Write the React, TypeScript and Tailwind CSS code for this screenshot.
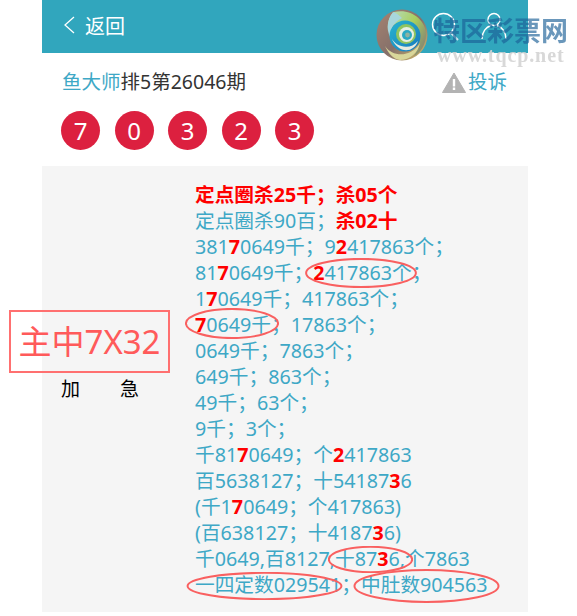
const FONT = "font-['Noto_Sans','Noto_Sans_CJK_SC',sans-serif]";

// red bold digit inside a line
function R({ children }: { children: React.ReactNode }) {
  return <b className="font-bold text-[#ff0000]">{children}</b>;
}

function Ring({ className }: { className: string }) {
  return (
    <svg className={`absolute ${className}`} viewBox="0 0 100 100" preserveAspectRatio="none">
      <ellipse cx="50" cy="50" rx="49" ry="47" fill="none" stroke="#f96060" strokeWidth="2" vectorEffect="non-scaling-stroke" />
    </svg>
  );
}

function Logo() {
  return (
    <svg width="52" height="52" viewBox="0 0 52 52">
      <defs>
        <linearGradient id="outer" x1="0" y1="0.2" x2="0.8" y2="1">
          <stop offset="0" stopColor="#a0806f" />
          <stop offset="0.55" stopColor="#85706a" />
          <stop offset="1" stopColor="#c7b06a" />
        </linearGradient>
        <linearGradient id="band" x1="0" y1="0" x2="1" y2="0.6">
          <stop offset="0" stopColor="#b8dcc8" />
          <stop offset="0.6" stopColor="#a9cf5e" />
          <stop offset="1" stopColor="#8a8f70" />
        </linearGradient>
        <linearGradient id="inner" x1="0" y1="0" x2="1" y2="1">
          <stop offset="0" stopColor="#28b5cf" />
          <stop offset="1" stopColor="#1778bd" />
        </linearGradient>
      </defs>
      <circle cx="26" cy="26" r="25.5" fill="url(#outer)" />
      <path d="M18 3C34-1 50 10 50 26 50 36 44 44 38 47 44 38 45 26 38 18 32 10 20 11 12 22 11 14 13 7 18 3Z" fill="url(#band)" />
      <path d="M17 3C10 12 10 24 17 33 13 22 16 14 26 9 23 6 20 4 17 3Z" fill="#a8d6dc" />
      <path d="M9 37C17 49 36 48 44 34 42 44 34 51 24 51 17 50 12 44 9 37Z" fill="#d9d79a" />
      <circle cx="29" cy="27" r="15.5" fill="url(#inner)" />
      <path d="M15 28C19 38 34 42 42 32 38 44 22 46 15 28Z" fill="#e8ebe0" />
      <circle cx="30" cy="25" r="10" fill="#8fc460" />
      <circle cx="30.5" cy="25.5" r="7.5" fill="#e6efe3" />
      <circle cx="31" cy="26" r="5" fill="#2aa9c4" />
      <circle cx="31.5" cy="26" r="2.4" fill="#8fb2a0" />
    </svg>
  );
}

const balls = ['7', '0', '3', '2', '3'];

export default function App() {
  return (
    <div className={`relative w-[577px] h-[616px] overflow-hidden bg-white ${FONT}`}>
      <div className="mx-[42px] w-[486px]">
        {/* header */}
        <header className="flex h-[53px] items-center bg-[#31a6bd] pl-[20px] text-white">
          <svg width="14" height="20" viewBox="0 0 14 20" className="mb-[3px]">
            <path d="M12 2 3 10l9 8" fill="none" stroke="currentColor" strokeWidth="1.3" />
          </svg>
          <span className="ml-[9px] text-[20px] leading-none">返回</span>
        </header>

        {/* title */}
        <div className="flex h-[58px] items-center justify-between pl-[20px] pr-[21px]">
          <p className="text-[19.5px] text-[#333]">
            <span className="text-[#3ea8c6]">鱼大师</span>排5第26046期
          </p>
          <div className="flex items-center gap-[2px]">
            <svg width="24" height="21" viewBox="0 0 24 21">
              <path d="M12 1 23.5 20.5H.5Z" fill="#b3b3b3" stroke="#b3b3b3" strokeLinejoin="round" />
              <rect x="10.8" y="7" width="2.4" height="7.5" fill="#fff" />
              <rect x="10.8" y="15.5" width="2.4" height="2.5" fill="#fff" />
            </svg>
            <span className="text-[19.5px] text-[#3ea8c6]">投诉</span>
          </div>
        </div>

        {/* balls */}
        <div className="flex gap-[14.5px] pl-[19px]">
          {balls.map((b, i) => (
            <span key={i} className="flex h-[39px] w-[39px] items-center justify-center rounded-full bg-[#dc203f] text-[24px] leading-none text-white">
              {b}
            </span>
          ))}
        </div>

        {/* content */}
        <div className="mt-[16px] flex h-[446px] bg-[#f5f5f5] pt-[16px]">
          <div className="flex w-[153px] shrink-0 gap-[40px] pl-[19px] pt-[194px] text-[19px] leading-[26px] text-black">
            <span>加</span>
            <span>急</span>
          </div>
          <div className="whitespace-nowrap text-[19.7px] leading-[26px] text-[#3ea8c6]">
            <div className="font-bold text-[#ff0000]">定点圈杀25千；杀05个</div>
            <div>定点圈杀90百；<R>杀02十</R></div>
            <div>381<R>7</R>0649千；9<R>2</R>417863个；</div>
            <div>81<R>7</R>0649千；<R>2</R>417863个；</div>
            <div>1<R>7</R>0649千；417863个；</div>
            <div><R>7</R>0649千；17863个；</div>
            <div>0649千；7863个；</div>
            <div>649千；863个；</div>
            <div>49千；63个；</div>
            <div>9千；3个；</div>
            <div>千81<R>7</R>0649；个<R>2</R>417863</div>
            <div>百5638127；十54187<R>3</R>6</div>
            <div>(千1<R>7</R>0649；个417863)</div>
            <div>(百638127；十4187<R>3</R>6)</div>
            <div>千0649,百8127,十87<R>3</R>6,个7863</div>
            <div>一四定数029541；中肚数904563</div>
          </div>
        </div>
      </div>

      {/* hand-drawn circles over the text */}
      <Ring className="left-[305px] top-[258px] h-[30px] w-[112px]" />
      <Ring className="left-[185px] top-[308px] h-[31px] w-[94px]" />
      <Ring className="left-[328px] top-[546px] h-[27px] w-[85px]" />
      <Ring className="left-[186px] top-[572px] h-[28px] w-[157px]" />
      <Ring className="left-[353px] top-[569px] h-[34px] w-[147px]" />

      {/* stamp */}
      <div className="absolute left-[9px] top-[310px] flex h-[63px] w-[161px] items-center justify-center border-2 border-[#ff7070] text-[33px] leading-none text-[#ff5a5a]">
        主中7X32
      </div>

      {/* header icons */}
      <svg className="absolute left-[431px] top-[12px]" width="30" height="30" viewBox="0 0 30 30" fill="none" stroke="#fff" strokeWidth="1.4">
        <circle cx="12.5" cy="12.5" r="11" />
        <path d="m20 21 7 7" stroke="#cfe6ee" strokeWidth="2" />
      </svg>
      <svg className="absolute left-[481px] top-[12px]" width="28" height="30" viewBox="0 0 28 30" fill="none" stroke="#fff" strokeWidth="1.4">
        <circle cx="13" cy="7.5" r="6" />
        <path d="M1 27c0-7 4-12 9-13.5M16 13.5c5 1.5 9 6.5 9 13.5" />
      </svg>

      {/* watermark */}
      <div className="absolute left-[376px] top-[9px] blur-[0.3px]">
        <Logo />
      </div>
      <div className="absolute left-[433px] top-[16px] text-[27px] font-bold leading-[30px] text-[#1a5f96]/65 whitespace-nowrap blur-[0.4px]">
        特区彩票网
      </div>
      <div className="absolute left-[437px] top-[48px] font-['Liberation_Serif',serif] text-[20px] font-bold leading-[14px] tracking-[0.9px] text-[#d4d4d4]/90 whitespace-nowrap blur-[0.4px]">
        www.tqcp.net
      </div>
    </div>
  );
}
